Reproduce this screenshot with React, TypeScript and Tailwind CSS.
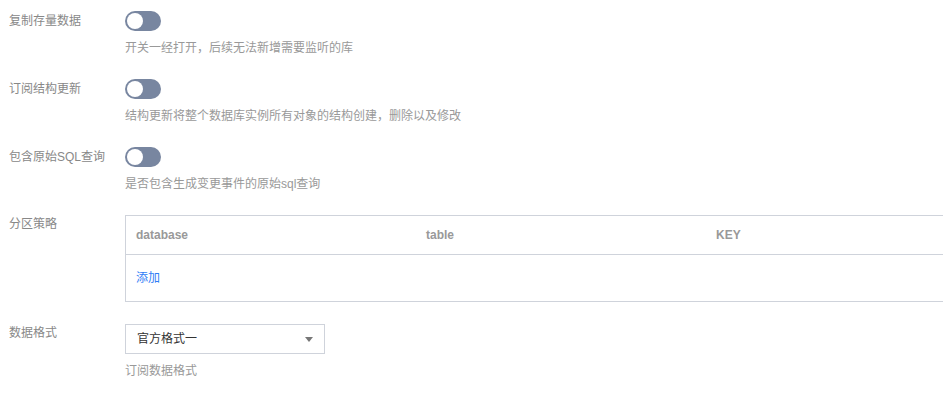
const font = { fontFamily: '"Liberation Sans", "Noto Sans CJK SC", sans-serif' };

const Toggle = () => (
  <div className="flex h-[20px] w-[36px] items-center rounded-full bg-[#7886a0] p-[2px]">
    <div className="h-[16px] w-[16px] rounded-full bg-white" />
  </div>
);

const SwitchItem = ({ label, desc }: { label: string; desc: string }) => (
  <div className="mb-[22px] flex">
    <div className="w-[125px] shrink-0 pl-[9px] text-[12px] leading-[20px] text-[#888]">{label}</div>
    <div className="flex flex-col">
      <Toggle />
      <div className="mt-[9px] text-[12px] leading-[17px] text-[#999]">{desc}</div>
    </div>
  </div>
);

export default function App() {
  const cols = ["database", "table", "KEY"];
  return (
    <div className="h-[397px] w-full overflow-hidden bg-white pt-[11px]" style={font}>
      <SwitchItem label="复制存量数据" desc="开关一经打开，后续无法新增需要监听的库" />
      <SwitchItem label="订阅结构更新" desc="结构更新将整个数据库实例所有对象的结构创建，删除以及修改" />
      <SwitchItem label="包含原始SQL查询" desc="是否包含生成变更事件的原始sql查询" />

      <div className="mb-[22px] mt-px flex">
        <div className="w-[125px] shrink-0 pl-[9px] pt-px text-[12px] leading-[16px] text-[#888]">分区策略</div>
        <div className="w-[880px] shrink-0 border border-[#cfd3db]">
          <div className="flex h-[39px] items-center border-b border-[#cfd3db]">
            {cols.map((c) => (
              <div key={c} className="w-[290px] shrink-0 px-[10px] text-[12px] font-bold text-[#999]">
                {c}
              </div>
            ))}
          </div>
          <div className="flex h-[46px] items-center px-[10px] text-[12px] text-[#2f7df6]">添加</div>
        </div>
      </div>

      <div className="flex">
        <div className="w-[125px] shrink-0 pl-[9px] pt-px text-[12px] leading-[16px] text-[#888]">数据格式</div>
        <div className="flex flex-col">
          <div className="flex h-[30px] w-[200px] items-center justify-between border border-[#cfd3db] pl-[11px] pr-[11px] text-[12px] text-[#333]">
            <span>官方格式一</span>
            <svg width="8" height="5" viewBox="0 0 8 5">
              <path d="M0 0 L8 0 L4 5 Z" fill="#777" />
            </svg>
          </div>
          <div className="mt-[9px] text-[12px] leading-[17px] text-[#999]">订阅数据格式</div>
        </div>
      </div>
    </div>
  );
}
